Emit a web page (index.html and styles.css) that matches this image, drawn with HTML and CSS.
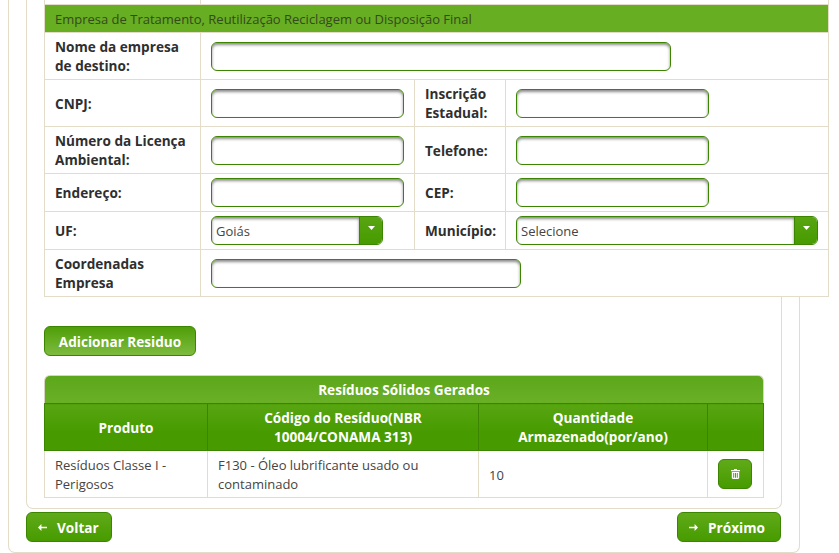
FILE: index.html
```html
<!DOCTYPE html>
<html lang="pt-BR">
<head>
    <meta charset="UTF-8">
    <meta name="viewport" content="width=device-width, initial-scale=1.0">
    <title>Resíduos Sólidos Gerados</title>
    <link rel="stylesheet" href="styles.css">
</head>
<body>

    <div class="outer">
        <div class="inner">

            <table class="form-table">
                <colgroup>
                    <col class="col-label">
                    <col class="col-field">
                    <col class="col-label2">
                    <col class="col-field2">
                </colgroup>
                <tr class="stub">
                    <td></td>
                    <td colspan="3"></td>
                </tr>
                <tr>
                    <td colspan="4" class="section">Empresa de Tratamento, Reutilização Reciclagem ou Disposição Final</td>
                </tr>
                <tr>
                    <th>Nome da empresa de destino:</th>
                    <td colspan="3"><input type="text" class="field field-long"></td>
                </tr>
                <tr>
                    <th>CNPJ:</th>
                    <td><input type="text" class="field"></td>
                    <th>Inscrição Estadual:</th>
                    <td><input type="text" class="field"></td>
                </tr>
                <tr>
                    <th>Número da Licença Ambiental:</th>
                    <td><input type="text" class="field"></td>
                    <th>Telefone:</th>
                    <td><input type="text" class="field"></td>
                </tr>
                <tr>
                    <th>Endereço:</th>
                    <td><input type="text" class="field"></td>
                    <th>CEP:</th>
                    <td><input type="text" class="field"></td>
                </tr>
                <tr>
                    <th>UF:</th>
                    <td>
                        <div class="combo combo-uf">
                            <span class="combo-value">Goiás</span>
                            <span class="combo-arrow"><svg width="7" height="4" viewBox="0 0 7 4"><path d="M0 0h7L3.5 4z" fill="#fff"/></svg></span>
                        </div>
                    </td>
                    <th>Município:</th>
                    <td>
                        <div class="combo combo-mun">
                            <span class="combo-value">Selecione</span>
                            <span class="combo-arrow"><svg width="7" height="4" viewBox="0 0 7 4"><path d="M0 0h7L3.5 4z" fill="#fff"/></svg></span>
                        </div>
                    </td>
                </tr>
                <tr>
                    <th>Coordenadas Empresa</th>
                    <td colspan="3"><input type="text" class="field field-mid"></td>
                </tr>
            </table>

            <button class="btn btn-add">Adicionar Residuo</button>

            <div class="grid">
                <div class="grid-title">Resíduos Sólidos Gerados</div>
                <table class="grid-table">
                    <colgroup>
                        <col class="g1">
                        <col class="g2">
                        <col class="g3">
                        <col class="g4">
                    </colgroup>
                    <thead>
                        <tr>
                            <th>Produto</th>
                            <th>Código do Resíduo(NBR 10004/CONAMA 313)</th>
                            <th>Quantidade Armazenado(por/ano)</th>
                            <th></th>
                        </tr>
                    </thead>
                    <tbody>
                        <tr>
                            <td>Resíduos Classe I - Perigosos</td>
                            <td>F130 - Óleo lubrificante usado ou contaminado</td>
                            <td>10</td>
                            <td class="actions">
                                <button class="btn btn-icon" aria-label="Excluir">
                                    <svg width="9" height="10" viewBox="0 0 9 10"><path d="M3 0h3v1h3v1.2H0V1h3zM.8 3h7.4v5.8c0 .7-.5 1.2-1.2 1.2H2c-.7 0-1.2-.5-1.2-1.2zM2.2 4v4.8h1V4zm1.8 0v4.8h1V4zm1.8 0v4.8h1V4z" fill="#fff"/></svg>
                                </button>
                            </td>
                        </tr>
                    </tbody>
                </table>
            </div>

        </div>

        <div class="nav-buttons">
            <button class="btn btn-nav btn-back">
                <svg width="9" height="7" viewBox="0 0 9 7"><path d="M9 2.8v1.4H3.4V7L0 3.5 3.4 0v2.8z" fill="#fff"/></svg>
                Voltar
            </button>
            <button class="btn btn-nav btn-next">
                <svg width="9" height="7" viewBox="0 0 9 7"><path d="M0 2.8v1.4h5.6V7L9 3.5 5.6 0v2.8z" fill="#fff"/></svg>
                Próximo
            </button>
        </div>
    </div>

</body>
</html>
```

FILE: styles.css
```css
html, body {
    margin: 0;
    padding: 0;
    background: #fff;
}
body {
    font-family: "Open Sans", "Noto Sans", sans-serif;
    font-size: 13px;
    line-height: 19px;
    color: #333;
}
.outer {
    box-sizing: border-box;
    width: 792px;
    height: 553px;
    margin-left: 8px;
    padding: 0 17px;
    border: 1px solid #e3dcc8;
    border-top: none;
    border-radius: 0 0 7px 7px;
}
.inner {
    box-sizing: border-box;
    width: 756px;
    height: 509px;
    padding: 0 17px;
    border: 1px solid #e3dcc8;
    border-top: none;
    border-radius: 0 0 7px 7px;
}

/* formulario */
.form-table {
    position: relative;
    width: 784px;
    table-layout: fixed;
    border-collapse: collapse;
    background: #fff;
}
.col-label { width: 156px; }
.col-field { width: 214px; }
.col-label2 { width: 91px; }
.col-field2 { width: 323px; }
.form-table th,
.form-table td {
    border: 1px solid #e3dcc8;
    padding: 4px 10px;
    text-align: left;
    vertical-align: middle;
}
.form-table th {
    font-size: 13.6px;
    font-weight: 700;
    color: #2f2f2f;
}
.form-table .stub td {
    height: 4px;
    padding: 0;
    border-top: none;
}
.form-table .section {
    height: 18px;
    padding: 5px 10px 3px;
    background: #67ae22;
    color: #35491d;
}
.field {
    display: block;
    box-sizing: border-box;
    width: 193px;
    height: 29px;
    padding: 0 5px;
    border: 1px solid #3c8500;
    border-radius: 6px;
    background: #fff;
    box-shadow: inset 0 2px 3px rgba(0,0,0,0.45);
    font-family: inherit;
}
.field-long { width: 460px; }
.field-mid { width: 310px; }
.combo {
    display: flex;
    box-sizing: border-box;
    height: 29px;
    border: 1px solid #3c8500;
    border-radius: 6px;
    overflow: hidden;
}
.combo-uf { width: 172px; }
.combo-mun { width: 302px; }
.combo-value {
    flex: 1;
    padding: 0 4px;
    line-height: 28px;
    color: #444;
    box-shadow: inset 0 2px 3px rgba(0,0,0,0.45);
}
.combo-arrow {
    display: flex;
    justify-content: center;
    align-items: flex-start;
    padding-top: 9px;
    box-sizing: border-box;
    width: 23px;
    border-left: 1px solid #3c8500;
    background: linear-gradient(#58a512, #479b00);
}

/* botoes */
.btn {
    box-sizing: border-box;
    height: 30px;
    padding: 1px 0 0;
    border: 1px solid #3c8500;
    border-radius: 6px;
    background: linear-gradient(#60aa19, #479b00);
    color: #fff;
    font-family: inherit;
    font-size: 13.6px;
    font-weight: 700;
    cursor: pointer;
}
.btn-add {
    display: block;
    width: 152px;
    margin-top: 29px;
    background: linear-gradient(#4f9f08, #7dbb3f);
}
.btn-icon {
    display: flex;
    align-items: center;
    justify-content: center;
    width: 34px;
    padding: 0;
}
.btn-nav {
    display: flex;
    align-items: center;
    gap: 10px;
    padding-left: 11px;
}
.btn-back { width: 86px; }
.btn-next { width: 104px; }
.nav-buttons {
    display: flex;
    justify-content: space-between;
    margin: 3px 1px 0 0;
}

/* grid de residuos */
.grid {
    margin-top: 19px;
}
.grid-title {
    box-sizing: border-box;
    height: 28px;
    border: 1px solid #d9d6c0;
    border-bottom: none;
    border-radius: 6px 6px 0 0;
    background: linear-gradient(#5ca71b, #6ab026);
    color: #fff;
    font-size: 13.6px;
    font-weight: 700;
    line-height: 28px;
    text-align: center;
}
.grid-table {
    width: 719px;
    table-layout: fixed;
    border-collapse: collapse;
}
.g1 { width: 163px; }
.g2 { width: 271px; }
.g3 { width: 229px; }
.g4 { width: 56px; }
.grid-table th {
    height: 38px;
    padding: 4px 10px;
    border: 1px solid #3c8500;
    background: linear-gradient(#58a512, #479b00 60%);
    color: #fff;
    font-size: 13.6px;
    font-weight: 700;
    text-align: center;
}
.grid-table td {
    padding: 5px 10px 3px;
    border: 1px solid #e3dcc8;
    color: #444;
}
.grid-table .actions {
    padding: 4px 10px;
}
```
